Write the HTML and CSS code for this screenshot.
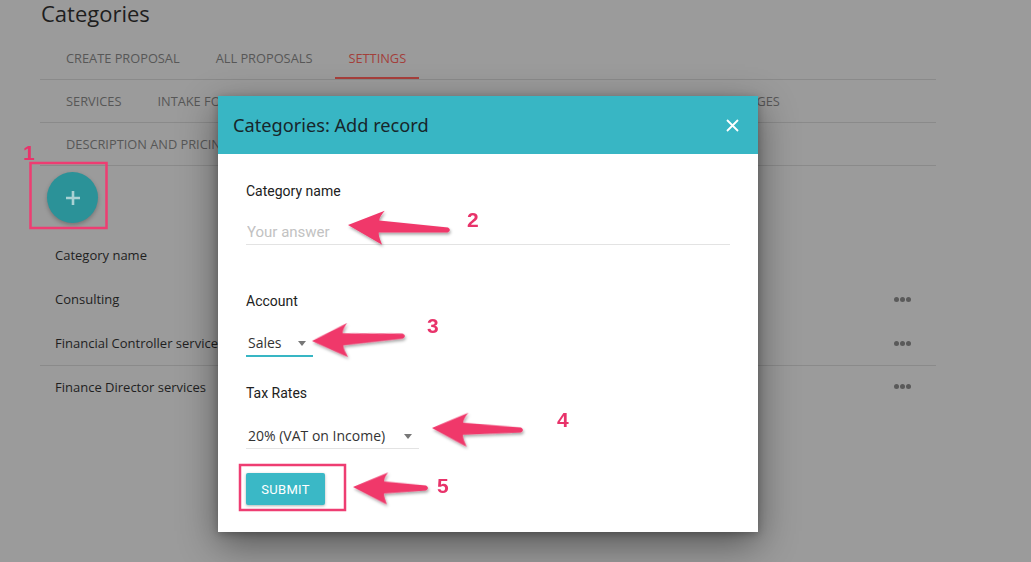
FILE: index.html
```html
<!DOCTYPE html>
<html>
<head>
    <meta charset="utf-8">
    <title>Categories</title>
    <link rel="stylesheet" href="styles.css">
</head>
<body>
<div class="page">
    <h1 class="title">Categories</h1>
    <div class="tabs">
        <a class="tab">CREATE PROPOSAL</a>
        <a class="tab">ALL PROPOSALS</a>
        <a class="tab active">SETTINGS</a>
    </div>
    <div class="tabs">
        <a class="tab">SERVICES</a>
        <a class="tab">INTAKE FORMS</a>
        <a class="tab">CATEGORIES</a>
        <a class="tab">ACCOUNTS</a>
        <a class="tab">TAXES</a>
        <a class="tab">TEMPLATES</a>
        <a class="tab">EMAIL MESSAGES</a>
    </div>
    <div class="tabs">
        <a class="tab">DESCRIPTION AND PRICING</a>
    </div>
    <div class="fab-row">
        <span class="fab"><svg width="16" height="16" viewBox="0 0 16 16"><path d="M8 1V15M1 8H15" stroke="#a9d2d4" stroke-width="2.6"/></svg></span>
    </div>
    <div class="list">
        <div class="row">Category name</div>
        <div class="row">Consulting<span class="more"><i></i><i></i><i></i></span></div>
        <div class="row">Financial Controller services<span class="more"><i></i><i></i><i></i></span></div>
        <div class="row line">Finance Director services<span class="more"><i></i><i></i><i></i></span></div>
    </div>
</div>

<div class="modal">
    <div class="modal-head">
        <span>Categories: Add record</span>
        <svg class="close" width="13" height="13" viewBox="0 0 13 13"><path d="M1 1L12 12M12 1L1 12" stroke="#fff" stroke-width="1.8"/></svg>
    </div>
    <div class="modal-body">
        <label class="label">Category name</label>
        <input class="answer" placeholder="Your answer">
        <label class="label acc">Account</label>
        <div class="select focus">Sales<b></b></div>
        <label class="label tax">Tax Rates</label>
        <div class="select wide">20% (VAT on Income)<b></b></div>
        <button class="submit">SUBMIT</button>
    </div>
</div>

<svg class="notes" width="1031" height="562" viewBox="0 0 1031 562">
    <defs>
        <filter id="sh" x="-20%" y="-60%" width="140%" height="220%">
            <feDropShadow dx="1" dy="2" stdDeviation="1.5" flood-color="#000" flood-opacity=".35"/>
        </filter>
    </defs>
    <rect x="30.5" y="163" width="76" height="65" fill="none" stroke="#ee3d72" stroke-width="2.5"/>
    <rect x="240" y="465" width="105" height="45" fill="none" stroke="#ee3d72" stroke-width="2.5"/>
    <!-- callout arrows: tip at origin, pointing left -->
    <g fill="#f0386b" filter="url(#sh)">
        <path transform="translate(348 225) rotate(2.8)" d="M0 0L36 -16C33 -12 31 -9 31 -6L100 -2.5Q104 0 100 2.5L31 6C31 10 33 13 35 18Z"/>
        <path transform="translate(312 341) rotate(-3.1)" d="M0 0L36 -16C33 -12 31 -9 31 -6L91 -2.5Q95 0 91 2.5L31 6C31 10 33 13 35 18Z"/>
        <path transform="translate(432 428) rotate(1.3)" d="M0 0L36 -16C33 -12 31 -9 31 -6L89 -2.5Q93 0 89 2.5L31 6C31 10 33 13 35 18Z"/>
        <path transform="translate(353 487) rotate(0.8)" d="M0 0L35 -15C32 -11 31 -9 31 -6L73 -2.5Q77 0 73 2.5L31 6C31 10 33 13 34 17Z"/>
    </g>
    <g class="num">
        <text x="23" y="160">1</text>
        <text x="467" y="227">2</text>
        <text x="427" y="333">3</text>
        <text x="557" y="427">4</text>
        <text x="437" y="493">5</text>
    </g>
</svg>
</body>
</html>
```

FILE: styles.css
```css
*{ margin:0; padding:0; box-sizing:border-box}
body{
    background:#9b9b9b;
    font-family:"Open Sans", "Liberation Sans", sans-serif;
    width:1031px; height:562px; overflow:hidden;
    position:relative
}
.page{ margin-left:40px; width:896px }
.title{
    font-size:22px; font-weight:400; line-height:27px;
    color:#1e1e1e;
    margin:0 0 10px 1px
}
.tabs{
    display:flex; gap:10px;
    height:43px; padding-left:13px;
    border-bottom:1px solid #8a8a8a
}
.tab{
    display:flex; align-items:center;
    padding:0 13px;
    font-size:12.8px; color:#575757;
    white-space:nowrap
}
.tab.active{ color:#a33f3a; box-shadow:inset 0 -2px 0 #a8403c }

.fab-row{ height:67px; padding:6px 0 0 7px }
.fab{
    display:flex; align-items:center; justify-content:center;
    width:51px; height:51px; border-radius:50%;
    background:#2b9298;
    box-shadow:0 2px 4px rgba(0,0,0,.25)
}
.row{
    display:flex; align-items:center; justify-content:space-between;
    height:44px; padding:0 25px 0 15px;
    font-size:13px; color:#1f1f1f
}
.row.line{ border-top:1px solid #8a8a8a; padding-bottom:2px }
.more{ display:flex; gap:1px }
.more i{ width:5px; height:5px; border-radius:50%; background:#5a5a5a }

/* dialog */
.modal{
    position:absolute; left:218px; top:96px;
    width:540px;
    background:#fff;
    box-shadow:0 12px 36px rgba(0,0,0,.45), 0 2px 8px rgba(0,0,0,.25)
}
.modal-head{
    display:flex; align-items:center; justify-content:space-between;
    height:58px; padding:0 19px 0 15px;
    background:#38b6c4;
    font-family:"Noto Sans", sans-serif; font-size:18.2px; color:#17262b
}
.modal-body{
    display:flex; flex-direction:column; align-items:flex-start;
    padding:27px 28px 27px 28px;
    font-family:Roboto, sans-serif
}
.label{ font-size:14px; line-height:20px; color:#212121 }
.label.acc{ margin-top:46px }
.label.tax{ margin-top:26px }
.answer{
    width:100%; margin-top:21px;
    border:0; border-bottom:1px solid #e3e3e3; outline:0;
    padding:0 0 2px 1px;
    font:15px/20px Roboto, sans-serif; color:#333
}
.answer::placeholder{ color:#c2c2c2 }
.select{
    display:flex; align-items:center; justify-content:space-between;
    width:67px; margin-top:22px;
    padding:0 0 2px 2px;
    font-family:"Open Sans", sans-serif; font-size:14px; line-height:20px; color:#333;
    border-bottom:1px solid #e3e3e3
}
.select b{
    width:0; height:0; margin-right:7px;
    border-left:4px solid transparent; border-right:4px solid transparent;
    border-top:5px solid #777
}
.select.focus{ border-bottom:2px solid #38b6c4 }
.select.wide{ width:173px; margin-top:23px }
.submit{
    margin-top:24px;
    width:79px; height:32px;
    border:0; border-radius:2px;
    background:#3ab8c6; color:#fff;
    font-family:Roboto, sans-serif; font-size:13px; letter-spacing:.3px;
    box-shadow:0 1px 3px rgba(0,0,0,.3)
}

/* callouts */
.notes{ position:absolute; left:0; top:0; pointer-events:none }
.num text{ font-family:"Liberation Sans", Arial, sans-serif; font-size:21px; font-weight:bold; fill:#e8336a }
```
